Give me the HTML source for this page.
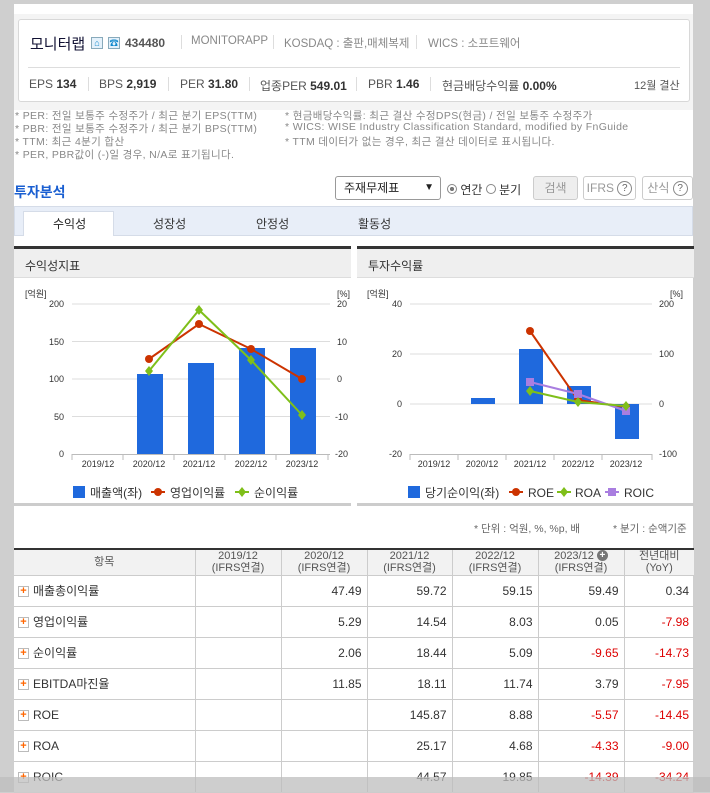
<!DOCTYPE html>
<html><head><meta charset="utf-8"><style>
*{margin:0;padding:0;box-sizing:border-box}
body{width:710px;height:792px;background:#cfcfcf;font-family:"Liberation Sans","Noto Sans CJK KR",sans-serif;position:relative;overflow:hidden;color:#333}
.a{position:absolute;white-space:nowrap}
#main{position:absolute;left:14px;top:4px;width:679px;height:788px;background:#fff}
.hdr{position:absolute;left:14px;top:14px;width:679px;height:96px;background:#f4f4f4}
.box{position:absolute;left:18px;top:19px;width:672px;height:83px;background:#fff;border:1px solid #d8d8d8;border-radius:3px}
.note{font-size:10.5px;color:#888;letter-spacing:.35px}
.sep{position:absolute;width:1px;background:#ddd}
.btn{position:absolute;border:1px solid #ccc;border-radius:3px;background:#fff;font-size:12px;color:#999;text-align:center}
.q{display:inline-block;width:15px;height:15px;border:1px solid #888;border-radius:50%;font-size:10px;line-height:13px;color:#666;vertical-align:middle}
table{position:absolute;left:14px;top:548px;width:680px;border-collapse:collapse;border-top:2px solid #333;font-size:12px;color:#333}
td{border:1px solid #ccc;height:31px;text-align:right;padding-right:5px;font-weight:normal}
th{border:1px solid #ccc;height:26px;background:#f2f2f2;text-align:center;padding:0;font-size:11px;color:#555;line-height:12px;font-weight:normal}
td:first-child{text-align:left;padding-left:4px;border-left:none}
th:first-child{border-left:none}
td:last-child,th:last-child{border-right:none}
.r{color:#d00}
.pl{display:inline-block;width:11px;height:11px;border:1px solid #bbb;color:#f60;font-size:11px;line-height:9px;text-align:center;font-weight:bold;margin-right:4px;vertical-align:middle}
</style></head><body>
<div id="main"></div>
<div class="hdr"></div>
<div class="box"></div>
<div class="a" style="left:30px;top:33px;font-size:15px;color:#113;">모니터랩</div>
<div class="a" style="left:91px;top:37px;width:12px;height:12px;border:1px solid #8ab;background:#e4f1fb;font-size:9px;color:#18c;text-align:center;line-height:10px">⌂</div>
<div class="a" style="left:108px;top:37px;width:12px;height:12px;border:1px solid #8ab;background:#e4f1fb;font-size:9px;color:#18c;text-align:center;line-height:10px">☎</div>
<div class="a" style="left:125px;top:36px;font-size:12px;font-weight:bold;color:#555">434480</div>
<div class="sep" style="left:181px;top:35px;height:14px"></div>
<div class="a" style="left:191px;top:35px;font-size:11.5px;color:#888">MONITORAPP</div>
<div class="sep" style="left:273px;top:35px;height:14px"></div>
<div class="a" style="left:284px;top:35px;font-size:11.5px;color:#888">KOSDAQ : 출판,매체복제</div>
<div class="sep" style="left:416px;top:35px;height:14px"></div>
<div class="a" style="left:428px;top:35px;font-size:11.5px;color:#888">WICS : 소프트웨어</div>
<div class="a" style="left:28px;top:67px;width:652px;height:1px;background:#ddd"></div>
<div class="a" style="left:29px;top:77px;font-size:12px;color:#555">EPS <b style="color:#333">134</b></div>
<div class="sep" style="left:88px;top:77px;height:14px"></div>
<div class="a" style="left:99px;top:77px;font-size:12px;color:#555">BPS <b style="color:#333">2,919</b></div>
<div class="sep" style="left:168px;top:77px;height:14px"></div>
<div class="a" style="left:180px;top:77px;font-size:12px;color:#555">PER <b style="color:#333">31.80</b></div>
<div class="sep" style="left:249px;top:77px;height:14px"></div>
<div class="a" style="left:260px;top:77px;font-size:12px;color:#555">업종PER <b style="color:#333">549.01</b></div>
<div class="sep" style="left:356px;top:77px;height:14px"></div>
<div class="a" style="left:368px;top:77px;font-size:12px;color:#555">PBR <b style="color:#333">1.46</b></div>
<div class="sep" style="left:430px;top:77px;height:14px"></div>
<div class="a" style="left:442px;top:77px;font-size:12px;color:#555">현금배당수익률 <b style="color:#333">0.00%</b></div>
<div class="a" style="left:634px;top:77px;font-size:11px;color:#555">12월 결산</div>

<div class="a note" style="left:15px;top:108px">* PER: 전일 보통주 수정주가 / 최근 분기 EPS(TTM)</div>
<div class="a note" style="left:15px;top:121px">* PBR: 전일 보통주 수정주가 / 최근 분기 BPS(TTM)</div>
<div class="a note" style="left:15px;top:134px">* TTM: 최근 4분기 합산</div>
<div class="a note" style="left:15px;top:147px">* PER, PBR값이 (-)일 경우, N/A로 표기됩니다.</div>
<div class="a note" style="left:285px;top:108px">* 현금배당수익률: 최근 결산 수정DPS(현금) / 전일 보통주 수정주가</div>
<div class="a note" style="left:285px;top:121px">* WICS: WISE Industry Classification Standard, modified by FnGuide</div>
<div class="a note" style="left:285px;top:134px">* TTM 데이터가 없는 경우, 최근 결산 데이터로 표시됩니다.</div>

<div class="a" style="left:14px;top:182px;font-size:14px;font-weight:bold;color:#1a5fd1">투자분석</div>
<div class="btn" style="left:335px;top:176px;width:106px;height:24px;border-color:#999;color:#222;text-align:left;padding-left:8px;line-height:22px;font-size:12px">주재무제표<span style="position:absolute;right:6px;font-size:10px">▼</span></div>
<div class="a" style="left:447px;top:181px;font-size:12px;color:#333"><span style="display:inline-block;width:10px;height:10px;border:1px solid #888;border-radius:50%;background:radial-gradient(#777 35%,#fff 40%)"></span> 연간 <span style="display:inline-block;width:10px;height:10px;border:1px solid #888;border-radius:50%"></span> 분기</div>
<div class="btn" style="left:533px;top:176px;width:45px;height:24px;background:#eee;line-height:22px">검색</div>
<div class="btn" style="left:583px;top:176px;width:53px;height:24px;line-height:22px">IFRS <span class="q">?</span></div>
<div class="btn" style="left:642px;top:176px;width:51px;height:24px;line-height:22px">산식 <span class="q">?</span></div>

<div class="a" style="left:14px;top:206px;width:679px;height:30px;background:#e8eef8;border:1px solid #d5dce8"></div>
<div class="a" style="left:23px;top:211px;width:91px;height:25px;background:#fff;border:1px solid #d5dce8;border-bottom:none"></div>
<div class="a" style="left:53px;top:215px;font-size:12px;color:#222">수익성</div>
<div class="a" style="left:153px;top:215px;font-size:12px;color:#333">성장성</div>
<div class="a" style="left:256px;top:215px;font-size:12px;color:#333">안정성</div>
<div class="a" style="left:358px;top:215px;font-size:12px;color:#333">활동성</div>

<div class="a" style="left:14px;top:246px;width:337px;height:3px;background:#333"></div>
<div class="a" style="left:14px;top:249px;width:337px;height:29px;background:#efefef;border-bottom:1px solid #ddd"></div>
<div class="a" style="left:25px;top:257px;font-size:12px;color:#333">수익성지표</div>
<div class="a" style="left:357px;top:246px;width:337px;height:3px;background:#333"></div>
<div class="a" style="left:357px;top:249px;width:337px;height:29px;background:#efefef;border-bottom:1px solid #ddd"></div>
<div class="a" style="left:368px;top:257px;font-size:12px;color:#333">투자수익률</div>
<div class="a" style="left:14px;top:503px;width:337px;height:3px;background:#ccc"></div>
<div class="a" style="left:357px;top:503px;width:337px;height:3px;background:#ccc"></div>

<svg class="a" style="left:0;top:0" width="710" height="792" font-family="Liberation Sans, Noto Sans CJK KR, sans-serif" font-size="9" fill="#333">
<g stroke="#ddd" stroke-width="1">
<line x1="72" y1="304" x2="330" y2="304"/><line x1="72" y1="341.5" x2="330" y2="341.5"/><line x1="72" y1="379" x2="330" y2="379"/><line x1="72" y1="416.5" x2="330" y2="416.5"/>
<line x1="410" y1="304" x2="652" y2="304"/><line x1="410" y1="354" x2="652" y2="354"/><line x1="410" y1="404" x2="652" y2="404"/>
</g>
<g stroke="#bbb"><line x1="72" y1="454.5" x2="330" y2="454.5"/><line x1="410" y1="454.5" x2="652" y2="454.5"/>
<line x1="72" y1="454" x2="72" y2="460"/><line x1="123" y1="454" x2="123" y2="460"/><line x1="174" y1="454" x2="174" y2="460"/><line x1="225" y1="454" x2="225" y2="460"/><line x1="276" y1="454" x2="276" y2="460"/><line x1="328" y1="454" x2="328" y2="460"/>
<line x1="410" y1="454" x2="410" y2="460"/><line x1="458" y1="454" x2="458" y2="460"/><line x1="506" y1="454" x2="506" y2="460"/><line x1="554" y1="454" x2="554" y2="460"/><line x1="602" y1="454" x2="602" y2="460"/><line x1="652" y1="454" x2="652" y2="460"/></g>
<text x="25" y="297">[억원]</text><text x="337" y="297">[%]</text>
<g text-anchor="end"><text x="64" y="307">200</text><text x="64" y="345">150</text><text x="64" y="382">100</text><text x="64" y="420">50</text><text x="64" y="457">0</text></g>
<g><text x="337" y="307">20</text><text x="337" y="345">10</text><text x="337" y="382">0</text><text x="335" y="420">-10</text><text x="335" y="457">-20</text></g>
<g text-anchor="middle"><text x="98" y="467">2019/12</text><text x="149" y="467">2020/12</text><text x="199" y="467">2021/12</text><text x="251" y="467">2022/12</text><text x="302" y="467">2023/12</text></g>
<g fill="#1f69dd"><rect x="137" y="374" width="26" height="80"/><rect x="188" y="363" width="26" height="91"/><rect x="239" y="348" width="26" height="106"/><rect x="290" y="348" width="26" height="106"/></g>
<polyline points="149,359 199,324 251,349 302,379" fill="none" stroke="#cc3300" stroke-width="2"/>
<g fill="#cc3300"><circle cx="149" cy="359" r="4"/><circle cx="199" cy="324" r="4"/><circle cx="251" cy="349" r="4"/><circle cx="302" cy="379" r="4"/></g>
<polyline points="149,371 199,310 251,360 302,415" fill="none" stroke="#7fbf1a" stroke-width="2"/>
<g fill="#7fbf1a"><path d="M149 366l4 5-4 5-4-5z"/><path d="M199 305l4 5-4 5-4-5z"/><path d="M251 355l4 5-4 5-4-5z"/><path d="M302 410l4 5-4 5-4-5z"/></g>
<g font-size="12"><rect x="73" y="486" width="12" height="12" fill="#1f69dd"/><text x="90" y="497">매출액(좌)</text>
<line x1="151" y1="492" x2="165" y2="492" stroke="#cc3300" stroke-width="2"/><circle cx="158" cy="492" r="4" fill="#cc3300"/><text x="170" y="497">영업이익률</text>
<line x1="235" y1="492" x2="249" y2="492" stroke="#7fbf1a" stroke-width="2"/><path d="M242 487l4 5-4 5-4-5z" fill="#7fbf1a"/><text x="254" y="497">순이익률</text></g>

<text x="367" y="297">[억원]</text><text x="670" y="297">[%]</text>
<g text-anchor="end"><text x="402" y="307">40</text><text x="402" y="357">20</text><text x="402" y="407">0</text><text x="402" y="457">-20</text></g>
<g><text x="659" y="307">200</text><text x="659" y="357">100</text><text x="659" y="407">0</text><text x="659" y="457">-100</text></g>
<g text-anchor="middle"><text x="434" y="467">2019/12</text><text x="482" y="467">2020/12</text><text x="530" y="467">2021/12</text><text x="578" y="467">2022/12</text><text x="626" y="467">2023/12</text></g>
<g fill="#1f69dd"><rect x="471" y="398" width="24" height="6"/><rect x="519" y="349" width="24" height="55"/><rect x="567" y="386" width="24" height="18"/><rect x="615" y="404" width="24" height="35"/></g>
<polyline points="530,331 578,400 626,407" fill="none" stroke="#cc3300" stroke-width="2"/>
<g fill="#cc3300"><circle cx="530" cy="331" r="4"/><circle cx="578" cy="400" r="4"/><circle cx="626" cy="407" r="4"/></g>
<polyline points="530,382 578,394 626,411" fill="none" stroke="#a97ee0" stroke-width="2"/>
<g fill="#a97ee0"><rect x="526" y="378" width="8" height="8"/><rect x="574" y="390" width="8" height="8"/><rect x="622" y="407" width="8" height="8"/></g>
<polyline points="530,391 578,402 626,406" fill="none" stroke="#7fbf1a" stroke-width="2"/>
<g fill="#7fbf1a"><path d="M530 386l4 5-4 5-4-5z"/><path d="M578 397l4 5-4 5-4-5z"/><path d="M626 401l4 5-4 5-4-5z"/></g>
<g font-size="12"><rect x="408" y="486" width="12" height="12" fill="#1f69dd"/><text x="425" y="497">당기순이익(좌)</text>
<line x1="509" y1="492" x2="523" y2="492" stroke="#cc3300" stroke-width="2"/><circle cx="516" cy="492" r="4" fill="#cc3300"/><text x="528" y="497">ROE</text>
<line x1="557" y1="492" x2="571" y2="492" stroke="#7fbf1a" stroke-width="2"/><path d="M564 487l4 5-4 5-4-5z" fill="#7fbf1a"/><text x="575" y="497">ROA</text>
<line x1="605" y1="492" x2="619" y2="492" stroke="#a97ee0" stroke-width="2"/><rect x="608" y="488" width="8" height="8" fill="#a97ee0"/><text x="624" y="497">ROIC</text></g>
</svg>

<div class="a" style="left:474px;top:521px;font-size:10.5px;color:#666">* 단위 : 억원, %, %p, 배</div>
<div class="a" style="left:613px;top:521px;font-size:10.5px;color:#666">* 분기 : 순액기준</div>

<table>
<colgroup><col style="width:181px"><col style="width:86px"><col style="width:86px"><col style="width:85px"><col style="width:86px"><col style="width:86px"><col style="width:70px"></colgroup>
<tr><th>항목</th><th>2019/12<br>(IFRS연결)</th><th>2020/12<br>(IFRS연결)</th><th>2021/12<br>(IFRS연결)</th><th>2022/12<br>(IFRS연결)</th><th>2023/12 <span style="display:inline-block;width:11px;height:11px;border-radius:50%;background:#777;color:#fff;font-weight:bold;line-height:11px;font-size:10px;vertical-align:top">+</span><br>(IFRS연결)</th><th>전년대비<br>(YoY)</th></tr>
<tr><td><span class="pl">+</span>매출총이익률</td><td></td><td>47.49</td><td>59.72</td><td>59.15</td><td>59.49</td><td>0.34</td></tr>
<tr><td><span class="pl">+</span>영업이익률</td><td></td><td>5.29</td><td>14.54</td><td>8.03</td><td>0.05</td><td class="r">-7.98</td></tr>
<tr><td><span class="pl">+</span>순이익률</td><td></td><td>2.06</td><td>18.44</td><td>5.09</td><td class="r">-9.65</td><td class="r">-14.73</td></tr>
<tr><td><span class="pl">+</span>EBITDA마진율</td><td></td><td>11.85</td><td>18.11</td><td>11.74</td><td>3.79</td><td class="r">-7.95</td></tr>
<tr><td><span class="pl">+</span>ROE</td><td></td><td></td><td>145.87</td><td>8.88</td><td class="r">-5.57</td><td class="r">-14.45</td></tr>
<tr><td><span class="pl">+</span>ROA</td><td></td><td></td><td>25.17</td><td>4.68</td><td class="r">-4.33</td><td class="r">-9.00</td></tr>
<tr><td><span class="pl">+</span>ROIC</td><td></td><td></td><td>44.57</td><td>19.85</td><td class="r">-14.39</td><td class="r">-34.24</td></tr>
</table>
<div class="a" style="left:0;top:777px;width:710px;height:15px;background:rgba(190,190,190,.75)"></div>
<div class="a" style="left:0;top:0;width:710px;height:4px;background:#cfcfcf"></div>
</body></html>
